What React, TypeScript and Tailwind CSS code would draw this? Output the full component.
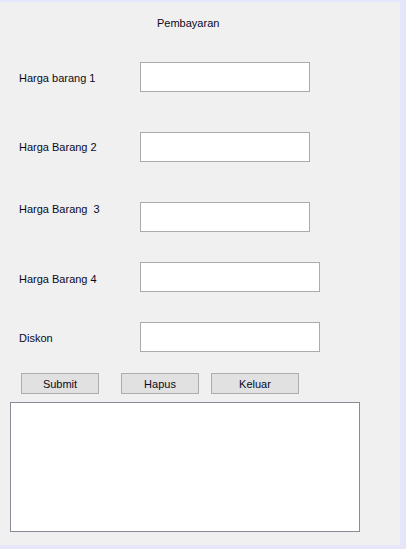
const FONT = "font-['Liberation_Sans',Arial,sans-serif]";

interface Row {
  label: string;
  width: string;
  gap: string;
  labelShift: string;
}

const ROWS: Row[] = [
  { label: "Harga barang 1", width: "w-[170px]", gap: "mt-[32px]", labelShift: "mt-[2px]" },
  { label: "Harga Barang 2", width: "w-[170px]", gap: "mt-[40px]", labelShift: "mt-0" },
  { label: "Harga Barang  3", width: "w-[170px]", gap: "mt-[40px]", labelShift: "-mt-[16px]" },
  { label: "Harga Barang 4", width: "w-[180px]", gap: "mt-[30px]", labelShift: "mt-[4px]" },
  { label: "Diskon", width: "w-[180px]", gap: "mt-[30px]", labelShift: "mt-[2px]" },
];

function Button({ label, width, ml }: { label: string; width: string; ml: string }) {
  return (
    <button
      className={`${ml} ${width} h-[21px] bg-[#e1e1e1] border border-[#adadad] text-[11px] leading-[14px] text-[#0a0a1e]`}
    >
      {label}
    </button>
  );
}

export default function App() {
  return (
    <div className={`w-[406px] h-[549px] bg-[#e6e6fa] pt-[2px] ${FONT}`}>
      <div className="w-[400px] h-[543px] bg-[#f0f0f0] flex flex-col text-[11px] leading-[14px] text-[#0a0a1e]">
        <p className="mt-[14px] pl-[157px] whitespace-pre">Pembayaran</p>

        {ROWS.map((r) => (
          <div key={r.label} className={`${r.gap} flex items-center h-[30px]`}>
            <span className={`w-[140px] pl-[19px] whitespace-pre ${r.labelShift}`}>{r.label}</span>
            <div className={`${r.width} h-[30px] bg-white border border-[#ababab]`} />
          </div>
        ))}

        <div className="mt-[21px] flex">
          <Button label="Submit" width="w-[78px]" ml="ml-[21px]" />
          <Button label="Hapus" width="w-[78px]" ml="ml-[22px]" />
          <Button label="Keluar" width="w-[88px]" ml="ml-[12px]" />
        </div>

        <div className="mt-[8px] ml-[10px] w-[350px] h-[130px] bg-white border border-[#8a8a96]" />
      </div>
    </div>
  );
}
